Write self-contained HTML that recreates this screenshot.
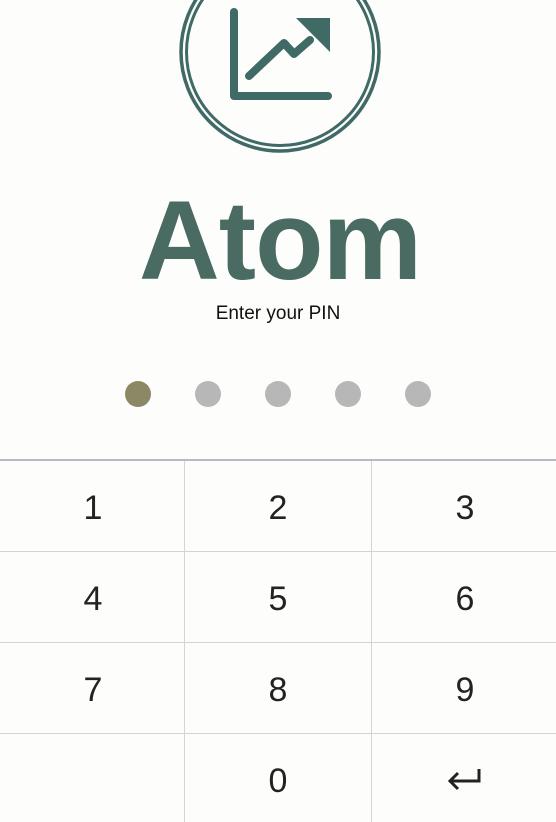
<!DOCTYPE html>
<html><head><meta charset="utf-8"><style>
html,body{margin:0;padding:0;background:#fdfdfb;width:556px;height:822px;overflow:hidden;font-family:"Liberation Sans",sans-serif;position:relative}
.logo{position:absolute;left:0;top:0}
.title{position:absolute;left:0;width:556px;top:181px;text-align:center;font-weight:bold;font-size:112px;color:#4a6b62;letter-spacing:-1px;line-height:120px;padding-left:2px}
.sub{position:absolute;left:0;width:556px;top:303px;text-align:center;font-size:19px;color:#111}
.dot{position:absolute;top:381px;width:26px;height:26px;border-radius:50%;background:#b7b7b7}
.line{position:absolute;background:#d4d4d8}
.k{position:absolute;width:186px;text-align:center;font-size:34px;color:#222;line-height:40px}
</style></head><body>
<svg class="logo" width="556" height="170" viewBox="0 0 556 170">
<circle cx="280" cy="52" r="99" fill="none" stroke="#3f6a66" stroke-width="3.5"/>
<circle cx="280" cy="52" r="93.5" fill="none" stroke="#3f6a66" stroke-width="3"/>
<path d="M234 12 V96 H328" fill="none" stroke="#3f6a66" stroke-width="8" stroke-linecap="round" stroke-linejoin="round"/>
<path d="M249 76 L284 43 L294 54 L310 40" fill="none" stroke="#3f6a66" stroke-width="8" stroke-linecap="round" stroke-linejoin="round"/>
<path d="M296 18 H330 V52 Z" fill="#3f6a66"/>
</svg>
<div class="title">Atom</div>
<div class="sub">Enter your PIN</div>
<div class="dot" style="left:125px;background:#8c8866"></div>
<div class="dot" style="left:195px"></div>
<div class="dot" style="left:265px"></div>
<div class="dot" style="left:335px"></div>
<div class="dot" style="left:405px"></div>
<div class="line" style="left:0;top:459px;width:556px;height:2px;background:#b8b8cc"></div>
<div class="line" style="left:0;top:551px;width:556px;height:1px"></div>
<div class="line" style="left:0;top:642px;width:556px;height:1px"></div>
<div class="line" style="left:0;top:733px;width:556px;height:1px"></div>
<div class="line" style="left:184px;top:461px;width:1px;height:361px"></div>
<div class="line" style="left:371px;top:461px;width:1px;height:361px"></div>
<div class="k" style="left:0;top:488px">1</div>
<div class="k" style="left:185px;top:488px">2</div>
<div class="k" style="left:372px;top:488px">3</div>
<div class="k" style="left:0;top:579px">4</div>
<div class="k" style="left:185px;top:579px">5</div>
<div class="k" style="left:372px;top:579px">6</div>
<div class="k" style="left:0;top:670px">7</div>
<div class="k" style="left:185px;top:670px">8</div>
<div class="k" style="left:372px;top:670px">9</div>
<div class="k" style="left:185px;top:761px">0</div>
<svg style="position:absolute;left:446px;top:765px" width="36" height="28" viewBox="0 0 36 28">
<path d="M33 4 V16 H4 M12 8 L4 16 L12 24" fill="none" stroke="#222" stroke-width="3"/>
</svg>
</body></html>
